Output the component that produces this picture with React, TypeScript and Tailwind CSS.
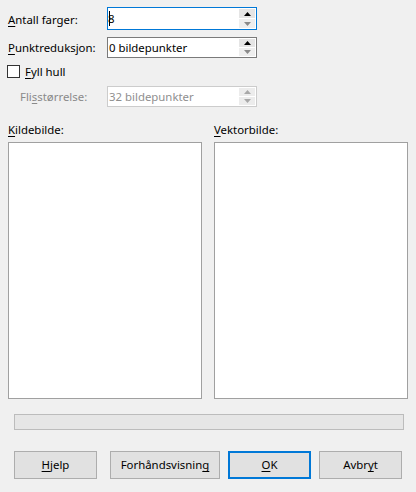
import React from 'react';

const Acc: React.FC<{ children: React.ReactNode }> = ({ children }) => (
    <span className="underline underline-offset-2 decoration-1">{children}</span>
);

const Tri: React.FC<{ up?: boolean; color: string }> = ({ up, color }) => (
    <svg width="7" height="4" viewBox="0 0 7 4">
        {up ? <path d="M0 4 L3.5 0 L7 4 Z" fill={color} /> : <path d="M0 0 L7 0 L3.5 4 Z" fill={color} />}
    </svg>
);

interface SpinProps {
    value: string;
    focused?: boolean;
    disabled?: boolean;
    caret?: boolean;
    h: string;
}

const Spin: React.FC<SpinProps> = ({ value, focused, disabled, caret, h }) => {
    const border = focused ? 'border-[#0078d7]' : disabled ? 'border-[#cccccc]' : 'border-[#7a7a7a]';
    return (
        <div className={`flex w-[150px] ${h} border ${border} bg-white items-stretch`}>
            <div className={`flex-1 flex items-center pl-[1px] ${disabled ? 'text-[#8f8f8f]' : 'text-black'}`}>
                {caret && <span className="w-px h-[15px] bg-black -mr-[2px]" />}
                {value}
            </div>
            <div className="flex flex-col w-[17px] py-[1px] pr-[1px] gap-[1px]">
                <div className={`flex-1 flex items-center justify-center ${disabled ? 'bg-[#ececec]' : 'bg-[#e5e5e5]'}`}>
                    <Tri up color={disabled ? '#a8a8a8' : '#000'} />
                </div>
                <div className={`flex-1 flex items-center justify-center ${disabled ? 'bg-[#ececec]' : 'bg-[#eeeeee]'}`}>
                    <Tri color={disabled ? '#a8a8a8' : '#8a8a8a'} />
                </div>
            </div>
        </div>
    );
};

const Btn: React.FC<{ w: string; primary?: boolean; children: React.ReactNode }> = ({ w, primary, children }) => (
    <button
        className={`${w} h-[28px] flex items-center justify-center bg-[#e1e1e1] ${primary ? 'border-2 border-[#0078d7]' : 'border border-[#adadad]'}`}
    >
        {children}
    </button>
);

export default function App() {
    return (
        <div
            className="w-[416px] h-[492px] bg-[#f0f0f0] text-[11.4px] text-black flex flex-col"
            style={{ fontFamily: '"Segoe UI", "Noto Sans", sans-serif' }}
        >
            {/* settings */}
            <div className="flex flex-col pl-[8px] pt-[7px]">
                <div className="flex items-center h-[23px]">
                    <span className="w-[99px] pt-[2px]"><Acc>A</Acc>ntall farger:</span>
                    <Spin value="8" focused caret h="h-[23px]" />
                </div>
                <div className="flex items-center h-[21px] mt-[7px]">
                    <span className="w-[99px] pt-[1px]"><Acc>P</Acc>unktreduksjon:</span>
                    <Spin value="0 bildepunkter" h="h-[21px]" />
                </div>
                <div className="flex items-center h-[15px] mt-[6px] -ml-[1px] gap-[5px]">
                    <span className="w-[13px] h-[13px] border border-[#333] bg-white" />
                    <span><Acc>F</Acc>yll hull</span>
                </div>
                <div className="flex items-center h-[21px] mt-[7px]">
                    <span className="w-[99px] pl-[12px] pt-[1px] text-[#8a8a8a]">Fli<Acc>s</Acc>størrelse:</span>
                    <Spin value="32 bildepunkter" disabled h="h-[21px]" />
                </div>
            </div>

            {/* previews */}
            <div className="flex gap-[12px] pl-[8px] mt-[14px]">
                <div className="flex flex-col w-[194px]">
                    <span className="h-[21px]"><Acc>K</Acc>ildebilde:</span>
                    <div className="h-[257px] border border-[#a0a0a0] bg-white" />
                </div>
                <div className="flex flex-col w-[194px]">
                    <span className="h-[21px]"><Acc>V</Acc>ektorbilde:</span>
                    <div className="h-[257px] border border-[#a0a0a0] bg-white" />
                </div>
            </div>

            {/* progress */}
            <div className="ml-[14px] mt-[15px] w-[390px] h-[16px] border border-[#bcbcbc] bg-[#e6e6e6]" />

            {/* buttons */}
            <div className="flex ml-[14px] mt-[21px]">
                <Btn w="w-[83px]"><Acc>H</Acc>jelp</Btn>
                <div className="ml-[13px]">
                    <Btn w="w-[110px]">Forhåndsvisnin<Acc>g</Acc></Btn>
                </div>
                <div className="ml-[8px]">
                    <Btn w="w-[83px]" primary><Acc>O</Acc>K</Btn>
                </div>
                <div className="ml-[8px]">
                    <Btn w="w-[83px]">Avbr<Acc>y</Acc>t</Btn>
                </div>
            </div>
        </div>
    );
}
